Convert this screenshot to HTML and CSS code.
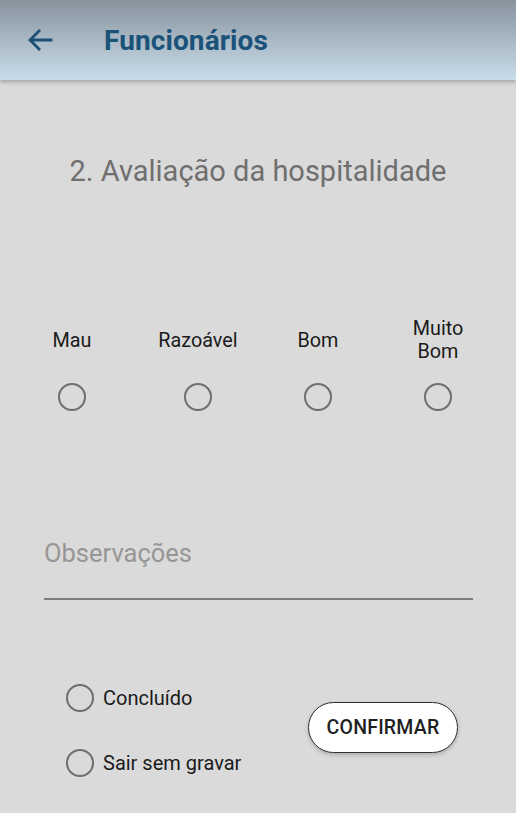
FILE: index.html
```html
<!DOCTYPE html>
<html lang="pt">
<head>
<meta charset="utf-8">
<link rel="stylesheet" href="styles.css">
</head>
<body>
<header class="appbar">
  <svg class="back" width="26" height="24" viewBox="0 0 26 24">
    <path d="M24 12H4M12 3L3 12l9 9" fill="none" stroke="#1a4f76" stroke-width="2.8" stroke-linecap="square"/>
  </svg>
  <h1 class="title">Funcionários</h1>
</header>
<main class="content">
  <h2 class="question">2. Avaliação da hospitalidade</h2>
  <div class="rating">
    <div class="opt"><span class="label">Mau</span><span class="radio"></span></div>
    <div class="opt"><span class="label">Razoável</span><span class="radio"></span></div>
    <div class="opt"><span class="label">Bom</span><span class="radio"></span></div>
    <div class="opt"><span class="label">Muito<br>Bom</span><span class="radio"></span></div>
  </div>
  <div class="field">
    <span class="placeholder">Observações</span>
  </div>
  <div class="footer">
    <div class="choices">
      <div class="choice"><span class="radio"></span><span>Concluído</span></div>
      <div class="choice"><span class="radio"></span><span>Sair sem gravar</span></div>
    </div>
    <button class="confirm">CONFIRMAR</button>
  </div>
</main>
</body>
</html>
```
FILE: styles.css
```css
* { box-sizing: border-box; }
html, body { margin: 0; padding: 0; }
body {
  width: 516px;
  height: 813px;
  background: #dadada;
  font-family: Roboto, "Noto Sans", sans-serif;
  overflow: hidden;
}
.appbar {
  height: 80px;
  display: flex;
  align-items: center;
  background: linear-gradient(180deg, #87939d 0%, #a9b8c4 50%, #c9dcea 100%);
  box-shadow: 0 2px 4px rgba(0,0,0,0.25);
  position: relative;
  z-index: 1;
}
.back { margin-left: 27px; margin-top: -1px; }
.title {
  margin: 0 0 0 51px;
  font-size: 28px;
  font-weight: 700;
  color: #1a5279;
  letter-spacing: 0.1px;
}
.content { display: flex; flex-direction: column; }
.question {
  margin: 72px 0 0;
  text-align: center;
  font-size: 29px;
  font-weight: 400;
  color: #6f6f6f;
  line-height: 38px;
}
.rating {
  margin-top: 127px;
  padding-left: 9px;
  display: grid;
  grid-template-columns: 126px 126px 114px 126px;
}
.opt {
  display: flex;
  flex-direction: column;
  align-items: center;
}
.label {
  height: 46px;
  display: flex;
  align-items: center;
  text-align: center;
  font-size: 19.8px;
  line-height: 23px;
  color: #1a1a1a;
}
.radio {
  width: 28px;
  height: 28px;
  border: 2.5px solid #6e6e6e;
  border-radius: 50%;
  flex: none;
}
.opt .radio { margin-top: 20px; }
.field {
  margin: 122px 43px 0 44px;
  height: 67px;
  border-bottom: 2px solid #7c7c7c;
}
.placeholder {
  display: block;
  font-size: 25.5px;
  line-height: 30px;
  color: #969696;
  margin-top: 5px;
}
.footer {
  margin-top: 84px;
  display: flex;
  align-items: center;
  padding-left: 66px;
  padding-right: 58px;
}
.choices { display: flex; flex-direction: column; gap: 37px; }
.choice {
  display: flex;
  align-items: center;
  gap: 9px;
  font-size: 20px;
  color: #1a1a1a;
}
.confirm {
  margin-left: auto;
  margin-top: -6px;
  width: 150px;
  height: 51px;
  border: 1.5px solid #2e2e2e;
  border-radius: 26px;
  background: #ffffff;
  box-shadow: 0 2px 4px rgba(0,0,0,0.2);
  font-family: Roboto, sans-serif;
  font-size: 19.5px;
  font-weight: 500;
  color: #1e1e1e;
  letter-spacing: 0.2px;
  padding: 0;
}
```
